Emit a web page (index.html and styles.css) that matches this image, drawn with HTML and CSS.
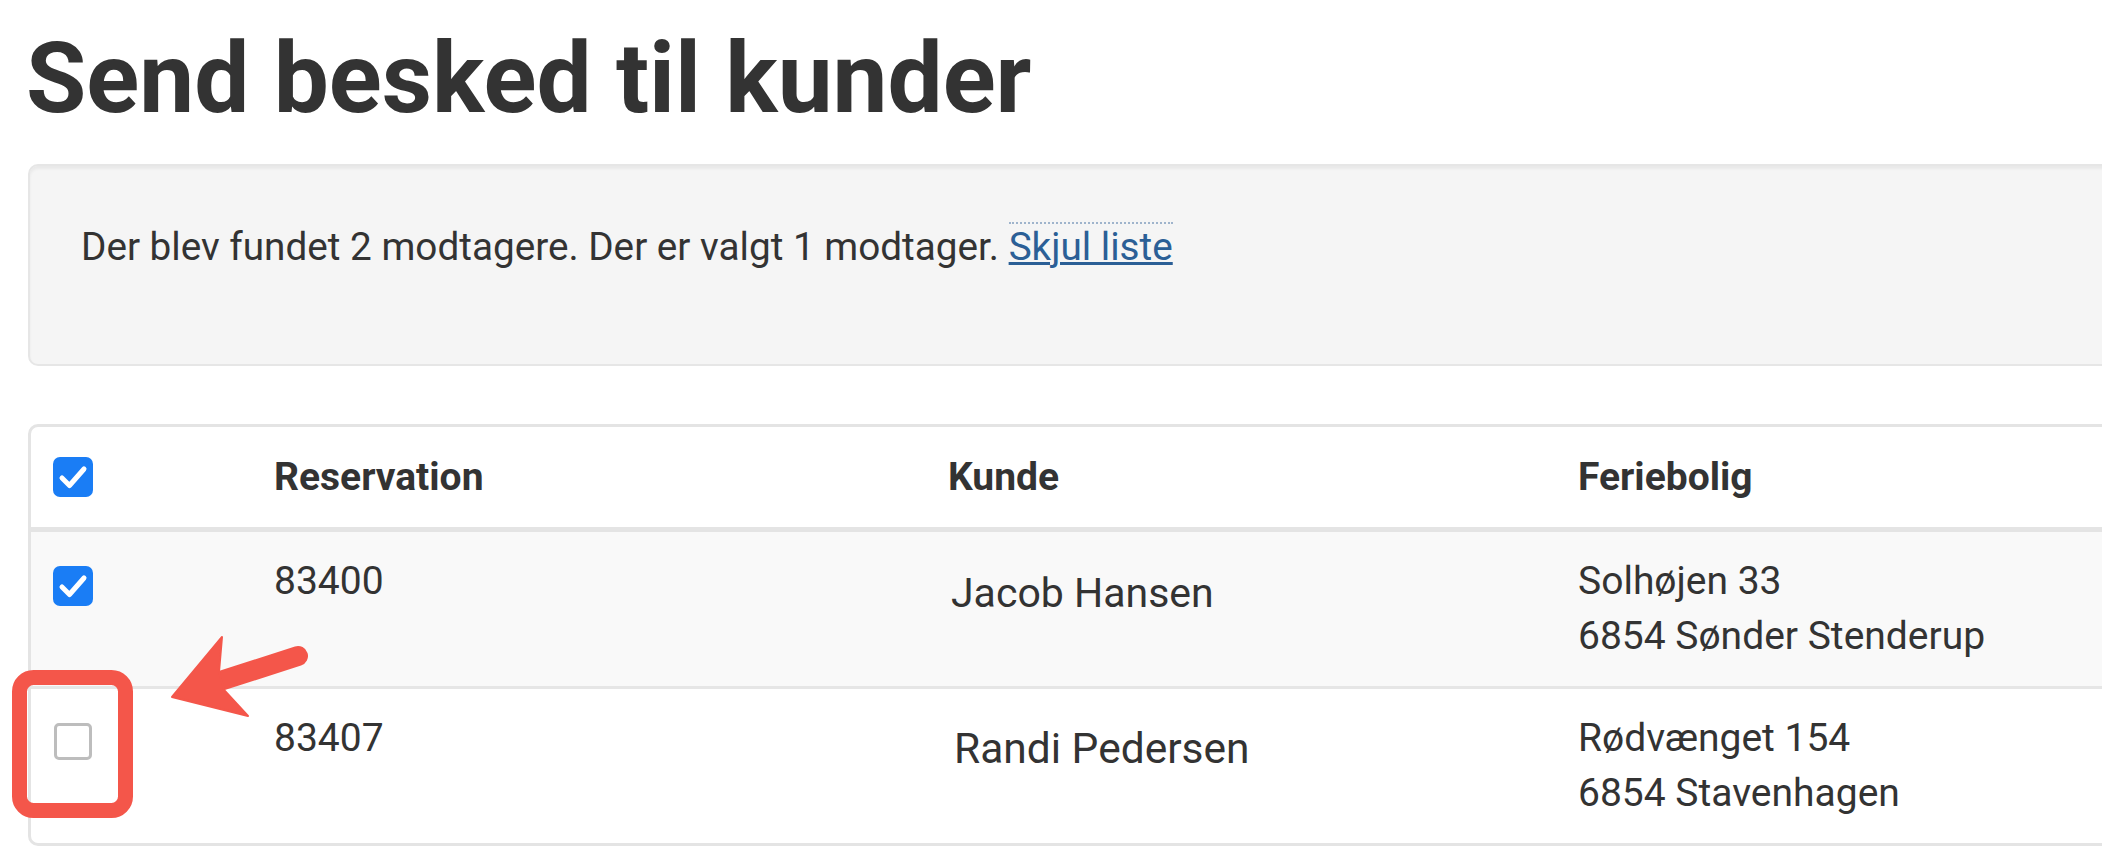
FILE: index.html
```html
<!DOCTYPE html>
<html lang="da">
<head>
<meta charset="utf-8">
<title>Send besked til kunder</title>
<link rel="stylesheet" href="styles.css">
</head>
<body>
<main class="page">
  <h1 class="title">Send besked til kunder</h1>

  <div class="well">
    <p class="summary">Der blev fundet 2 modtagere. Der er valgt 1 modtager. <a class="toggle" href="#">Skjul liste</a></p>
  </div>

  <div class="recipients">
    <table class="recipient-table">
      <colgroup>
        <col class="col-check">
        <col class="col-res">
        <col class="col-cust">
        <col>
      </colgroup>
      <thead>
        <tr>
          <th><span class="check check-on check-head"><svg viewBox="0 0 40 40"><path d="M9 21 L16.5 28.5 L31 12"/></svg></span></th>
          <th>Reservation</th>
          <th>Kunde</th>
          <th>Feriebolig</th>
        </tr>
      </thead>
      <tbody>
        <tr>
          <td><span class="check check-on"><svg viewBox="0 0 40 40"><path d="M9 21 L16.5 28.5 L31 12"/></svg></span></td>
          <td>83400</td>
          <td class="name">Jacob Hansen</td>
          <td>Solhøjen 33<br>6854 Sønder Stenderup</td>
        </tr>
        <tr>
          <td><span class="check check-off"></span></td>
          <td>83407</td>
          <td class="name name-alt">Randi Pedersen</td>
          <td>Rødvænget 154<br>6854 Stavenhagen</td>
        </tr>
      </tbody>
    </table>
  </div>

  <!-- callout pointing at the unchecked recipient -->
  <svg class="markup" width="2102" height="854" viewBox="0 0 2102 854">
    <rect x="19.5" y="677.5" width="106" height="133" rx="14" ry="14" fill="none" stroke="#f4564a" stroke-width="15"/>
    <line x1="214" y1="683" x2="298" y2="656" stroke="#f4564a" stroke-width="20" stroke-linecap="round"/>
    <path d="M172 697 L222 637 L219 672 L224 690 L248 716 Z" fill="#f4564a" stroke="#f4564a" stroke-width="2" stroke-linejoin="round"/>
  </svg>
</main>
</body>
</html>
```

FILE: styles.css
```css
body {
  margin: 0;
  background: #fff;
  color: #333;
  font-family: Roboto, "Helvetica Neue", Arial, sans-serif;
  overflow: hidden;
}

.page {
  position: relative;
  display: flow-root;
  width: 2400px;
  padding-left: 28px;
  box-sizing: border-box;
}

.title {
  margin: 25px 0 31px -2px;
  font-size: 98px;
  font-weight: 700;
  line-height: 108px;
  color: #333;
}

.well {
  background: #f5f5f5;
  border: 2px solid #e6e6e6;
  border-radius: 10px;
  box-shadow: inset 0 3px 3px rgba(0, 0, 0, 0.05);
  padding: 53px 51px;
  margin-bottom: 58px;
}

.summary {
  margin: 0 0 37px;
  font-size: 38.7px;
  line-height: 55px;
}

.toggle {
  color: #2b5f96;
  text-decoration: underline;
  text-decoration-thickness: 3px;
  text-underline-offset: 2px;
  border-top: 2px dotted #9fb4cc;
}

.recipients {
  border: 3px solid #e4e4e4;
  border-radius: 10px;
  overflow: hidden;
  background: #fff;
}

.recipient-table {
  width: 100%;
  border-collapse: collapse;
  table-layout: fixed;
  font-size: 39px;
  line-height: 55px;
}

.col-check { width: 221px; }
.col-res { width: 674px; }
.col-cust { width: 630px; }

.recipient-table th {
  text-align: left;
  font-weight: 700;
  vertical-align: top;
  padding: 23px 22px 22px;
  border-bottom: 5px solid #e4e4e4;
}

.recipient-table th:first-child,
.recipient-table td:first-child {
  padding-left: 22px;
}

.recipient-table td {
  vertical-align: top;
  padding: 22px;
}

.recipient-table tbody tr:nth-child(odd) {
  background: #f9f9f9;
}

.recipient-table tbody tr + tr td {
  border-top: 3px solid #e6e6e6;
}

.recipient-table td.name {
  font-size: 41px;
  padding-top: 34px;
  padding-left: 25px;
}

.recipient-table td.name-alt {
  font-size: 42.5px;
  padding-top: 32px;
  padding-left: 28px;
}

.check {
  display: block;
  box-sizing: border-box;
  margin-top: 12px;
}

.check-head {
  margin-top: 7px;
}

.check-on {
  width: 40px;
  height: 40px;
  border-radius: 7px;
  background: #1a7df5;
}

.check-on svg {
  display: block;
  width: 40px;
  height: 40px;
}

.check-on path {
  fill: none;
  stroke: #fff;
  stroke-width: 5;
  stroke-linecap: round;
  stroke-linejoin: round;
}

.check-off {
  width: 38px;
  height: 37px;
  margin-left: 1px;
  border: 3px solid #bdbdbd;
  border-radius: 5px;
  background: #fff;
}

.markup {
  position: absolute;
  top: 0;
  left: 0;
  pointer-events: none;
}
```
